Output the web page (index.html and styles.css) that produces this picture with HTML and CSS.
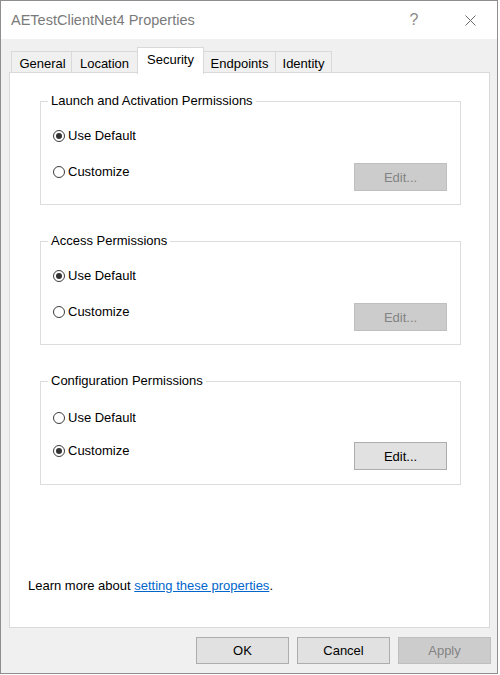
FILE: index.html
```html
<!DOCTYPE html>
<html>
<head>
<meta charset="utf-8">
<link rel="stylesheet" href="styles.css">
</head>
<body>
<div class="window">
  <div class="titlebar">
    <span class="title">AETestClientNet4 Properties</span>
    <span class="help">?</span>
    <span class="close"><svg width="11" height="11" viewBox="0 0 11 11"><path d="M0.5 0.5 L10.5 10.5 M10.5 0.5 L0.5 10.5" stroke="#6a6a6a" stroke-width="1" fill="none"/></svg></span>
  </div>
  <div class="client">
    <div class="tabs">
      <div class="tab tab-general">General</div>
      <div class="tab tab-location">Location</div>
      <div class="tab tab-security selected">Security</div>
      <div class="tab tab-endpoints">Endpoints</div>
      <div class="tab tab-identity">Identity</div>
    </div>
    <div class="panel">
      <fieldset class="group">
        <legend>Launch and Activation Permissions</legend>
        <div class="row first"><span class="radio checked"></span><span class="label">Use Default</span></div>
        <div class="row second"><span class="radio"></span><span class="label">Customize</span><button class="btn disabled">Edit...</button></div>
      </fieldset>
      <fieldset class="group">
        <legend>Access Permissions</legend>
        <div class="row first"><span class="radio checked"></span><span class="label">Use Default</span></div>
        <div class="row second"><span class="radio"></span><span class="label">Customize</span><button class="btn disabled">Edit...</button></div>
      </fieldset>
      <fieldset class="group alt">
        <legend>Configuration Permissions</legend>
        <div class="row first"><span class="radio"></span><span class="label">Use Default</span></div>
        <div class="row second"><span class="radio checked"></span><span class="label">Customize</span><button class="btn">Edit...</button></div>
      </fieldset>
      <p class="learn">Learn more about <a href="#">setting these properties</a>.</p>
    </div>
    <div class="buttons">
      <button class="btn">OK</button>
      <button class="btn">Cancel</button>
      <button class="btn disabled">Apply</button>
    </div>
  </div>
</div>
</body>
</html>
```

FILE: styles.css
```css
* { box-sizing: border-box; }
html, body { margin: 0; padding: 0; background: #ffffff; }
body {
  font-family: "Liberation Sans", Arial, sans-serif;
  font-size: 13px;
  color: #000;
}
.window {
  width: 498px;
  height: 674px;
  border: 1px solid #8e8e8e;
  display: flex;
  flex-direction: column;
  background: #f0f0f0;
}
.titlebar {
  height: 38px;
  flex: none;
  background: #ffffff;
  display: flex;
  align-items: center;
}
.title {
  flex: 1;
  padding-left: 10px;
  font-size: 14.5px;
  color: #7a7a7a;
}
.help {
  width: 20px;
  text-align: center;
  font-size: 16px;
  color: #8a8a8a;
  margin-right: 35px;
}
.close {
  width: 22px;
  display: flex;
  justify-content: center;
  margin-right: 16px;
}
.client {
  flex: 1;
  display: flex;
  flex-direction: column;
  padding: 8px 7px 9px 8px;
}
.tabs {
  display: flex;
  align-items: flex-end;
  padding-left: 2px;
  height: 26px;
  flex: none;
}
.tab {
  height: 22px;
  border: 1px solid #d9d9d9;
  border-bottom: none;
  background: #f0f0f0;
  text-align: center;
  line-height: 21px;
  padding-top: 1px;
  margin-left: -1px;
  white-space: nowrap;
}
.tab:first-child { margin-left: 0; }
.tab-general { width: 61px; padding-left: 2px; }
.tab-location { width: 67px; }
.tab-security { width: 67px; }
.tab-endpoints { width: 73px; }
.tab-identity { width: 57px; }
.tab.selected {
  height: 27px;
  margin-bottom: -1px;
  background: #ffffff;
  position: relative;
  z-index: 1;
  line-height: 24px;
  padding-top: 0;
}
.panel {
  flex: 1;
  margin-top: -1px;
  background: #ffffff;
  border: 1px solid #d9d9d9;
  display: flex;
  flex-direction: column;
  padding: 20px 0 33px 30px;
}
.group {
  width: 421px;
  height: 112px;
  margin: 0 0 28px 0;
  padding: 0 13px 12px 12px;
  border: 1px solid #dcdcdc;
  min-width: 0;
}
.group legend {
  padding: 0 3px;
  margin-left: -5px;
  line-height: 16px;
}
.row {
  display: flex;
  align-items: flex-start;
}
.row.first { margin-top: 19px; height: 16px; align-items: center; }
.row.second { margin-top: 19px; }
.group.alt .row.first { margin-top: 21px; }
.group.alt .row.second { margin-top: 16px; }
.row.second .radio { margin-top: 3px; }
.row.second .label { margin-top: 1px; line-height: 16px; flex: 1; }
.label { line-height: 16px; }
.radio {
  width: 12px;
  height: 12px;
  border: 1px solid #3c3c3c;
  border-radius: 50%;
  margin-right: 3px;
  display: flex;
  align-items: center;
  justify-content: center;
  background: #fff;
  flex: none;
}
.radio.checked::after {
  content: "";
  width: 6px;
  height: 6px;
  border-radius: 50%;
  background: #333333;
}
.btn {
  width: 93px;
  height: 28px;
  background: #e1e1e1;
  border: 1px solid #adadad;
  font-family: "Liberation Sans", Arial, sans-serif;
  font-size: 13px;
  color: #000;
  padding: 0;
  margin: 0;
}
.btn.disabled {
  background: #cccccc;
  border-color: #bfbfbf;
  color: #838383;
}
.learn {
  margin: auto 0 0 -12px;
  line-height: 16px;
}
.learn a {
  color: #0066cc;
  text-decoration: underline;
}
.buttons {
  flex: none;
  display: flex;
  justify-content: flex-end;
  gap: 8px;
  margin-top: 9px;
  margin-right: -1px;
}
.buttons .btn {
  width: 93px;
  height: 27px;
}
```
